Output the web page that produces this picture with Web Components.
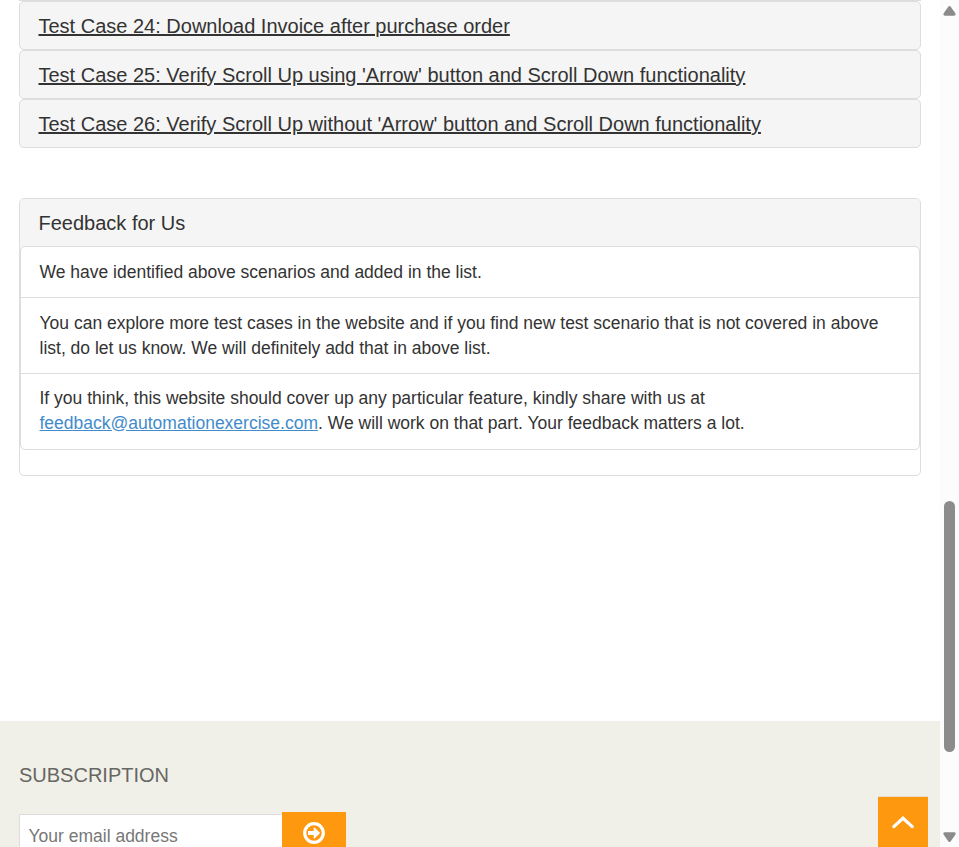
<!DOCTYPE html>
<html lang="en">
<head>
<meta charset="utf-8">
<title>Test Cases</title>
<style>
html,body{margin:0;height:100%;overflow:hidden;background:#fff}
body{font-family:"Liberation Sans",Arial,sans-serif}
</style>
</head>
<body>
<page-shell>
  <case-list>
    <case-row>Test Case 24: Download Invoice after purchase order</case-row>
    <case-row>Test Case 25: Verify Scroll Up using 'Arrow' button and Scroll Down functionality</case-row>
    <case-row>Test Case 26: Verify Scroll Up without 'Arrow' button and Scroll Down functionality</case-row>
  </case-list>
  <feedback-panel>
    <span slot="title">Feedback for Us</span>
    <feedback-item>We have identified above scenarios and added in the list.</feedback-item>
    <feedback-item>You can explore more test cases in the website and if you find new test scenario that is not covered in above list, do let us know. We will definitely add that in above list.</feedback-item>
    <feedback-item>If you think, this website should cover up any particular feature, kindly share with us at <mail-link>feedback@automationexercise.com</mail-link>. We will work on that part. Your feedback matters a lot.</feedback-item>
  </feedback-panel>
  <subscribe-footer slot="footer"></subscribe-footer>
  <scroll-rail slot="rail"></scroll-rail>
  <scroll-up slot="overlay"></scroll-up>
</page-shell>
<script>
const define = (name, html) => customElements.define(name, class extends HTMLElement {
  constructor() {
    super();
    this.attachShadow({ mode: 'open' }).innerHTML = html;
  }
});

define('page-shell', `<style>
:host{display:flex;position:relative;width:959px;height:847px;overflow:hidden}
.page{width:940px;display:flex;flex-direction:column}
main{flex:1;min-height:0;padding:0 19px}
</style><div class="page"><main><slot></slot></main><slot name="footer"></slot></div><slot name="rail"></slot><slot name="overlay"></slot>`);

define('case-list', `<style>
:host{display:block;border-top:1px solid #ddd}
</style><slot></slot>`);

define('case-row', `<style>
:host{display:flex;align-items:center;box-sizing:border-box;width:902px;height:49px;padding:1px 18.5px 0;border:1px solid #ddd;border-radius:5px;background:#f5f5f5;color:#333;font-size:20px;line-height:22px}
a{text-decoration:underline}
</style><a><slot></slot></a>`);

define('feedback-panel', `<style>
:host{display:block;box-sizing:border-box;width:902px;height:278px;margin-top:50px;border:1px solid #ddd;border-radius:5px}
header{display:flex;align-items:center;height:47px;padding:1px 18.5px 0;box-sizing:border-box;background:#f5f5f5;border-radius:4px 4px 0 0;color:#333;font-size:20px;line-height:22px}
.wrap{background:linear-gradient(#f5f5f5 6px,#fff 6px)}
.list{box-sizing:border-box;height:204px;border:1px solid #ddd;border-radius:5px;background:#fff}
</style><header><slot name="title"></slot></header><div class="wrap"><div class="list"><slot></slot></div></div>`);

define('feedback-item', `<style>
:host{display:block;padding:12.5px 18.5px;color:#333;font-size:17.5px;line-height:25px;border-top:1px solid #ddd}
:host(:first-child),:host(:nth-child(2)){border-top:0}
:host(:last-child){padding-top:11.5px}
</style><slot></slot>`);

define('mail-link', `<style>
:host{color:#428bca;text-decoration:underline}
</style><slot></slot>`);

define('subscribe-footer', `<style>
:host{display:block;box-sizing:border-box;height:126px;padding:43px 19px 0;background:#f0f0e9;overflow:hidden}
h2{margin:0 0 26px;color:#666663;font-size:20px;font-weight:400;line-height:22px}
form{display:flex;align-items:flex-start;margin:0}
.field{box-sizing:border-box;width:263px;height:44px;margin-top:2px;padding:0 8.5px;border:1px solid #ddd;border-right:0;background:#fff;color:#777;font-size:17.5px;line-height:42px}
button{display:flex;justify-content:center;width:64px;height:48px;padding:10px 0 0;border:0;background:#fe980f}
svg{display:block}
</style><h2>SUBSCRIPTION</h2><form><div class="field">Your email address</div><button type="button" aria-label="Subscribe"><svg width="22" height="22" viewBox="0 0 22 22"><circle cx="11" cy="11" r="9.3" fill="none" stroke="#fff" stroke-width="3.2"/><path d="M5 8.9h5.7V5.8q0-.8.7-.3l5.3 5q.5.5 0 1l-5.3 5q-.7.5-.7-.3v-3.1H5z" fill="#fff"/></svg></button></form>`);

define('scroll-rail', `<style>
:host{display:flex;flex-direction:column;align-items:center;box-sizing:border-box;width:19px;height:847px;padding-top:5px;background:#fcfcfc}
svg{display:block;flex:none}
.thumb{width:11px;height:251px;margin:485px 0 80px;border-radius:5.5px;background:#8b8b8b}
</style><svg width="13" height="11" viewBox="0 0 13 11"><path d="M5.4 1.6q1.1-1.3 2.2 0l4.7 6.7q1 2.4-1.2 2.4H1.9Q-.3 10.7.7 8.3z" fill="#8b8b8b"/></svg><div class="thumb"></div><svg width="13" height="11" viewBox="0 0 13 11"><path d="M5.4 9.4q1.1 1.3 2.2 0l4.7-6.7Q13.3.3 11.1.3H1.9Q-.3.3.7 2.7z" fill="#8b8b8b"/></svg>`);

define('scroll-up', `<style>
:host{position:absolute;left:878px;top:797px;width:50px;height:50px;display:flex;align-items:center;justify-content:center;background:#fe980f;box-shadow:0 -1px #e5ddcb}
svg{display:block}
</style><svg width="24" height="14" viewBox="0 0 24 14"><path d="M2.8 11.6 12 3.2l9.2 8.4" fill="none" stroke="#fff" stroke-width="3.2" stroke-linecap="round"/></svg>`);
</script>
</body>
</html>
